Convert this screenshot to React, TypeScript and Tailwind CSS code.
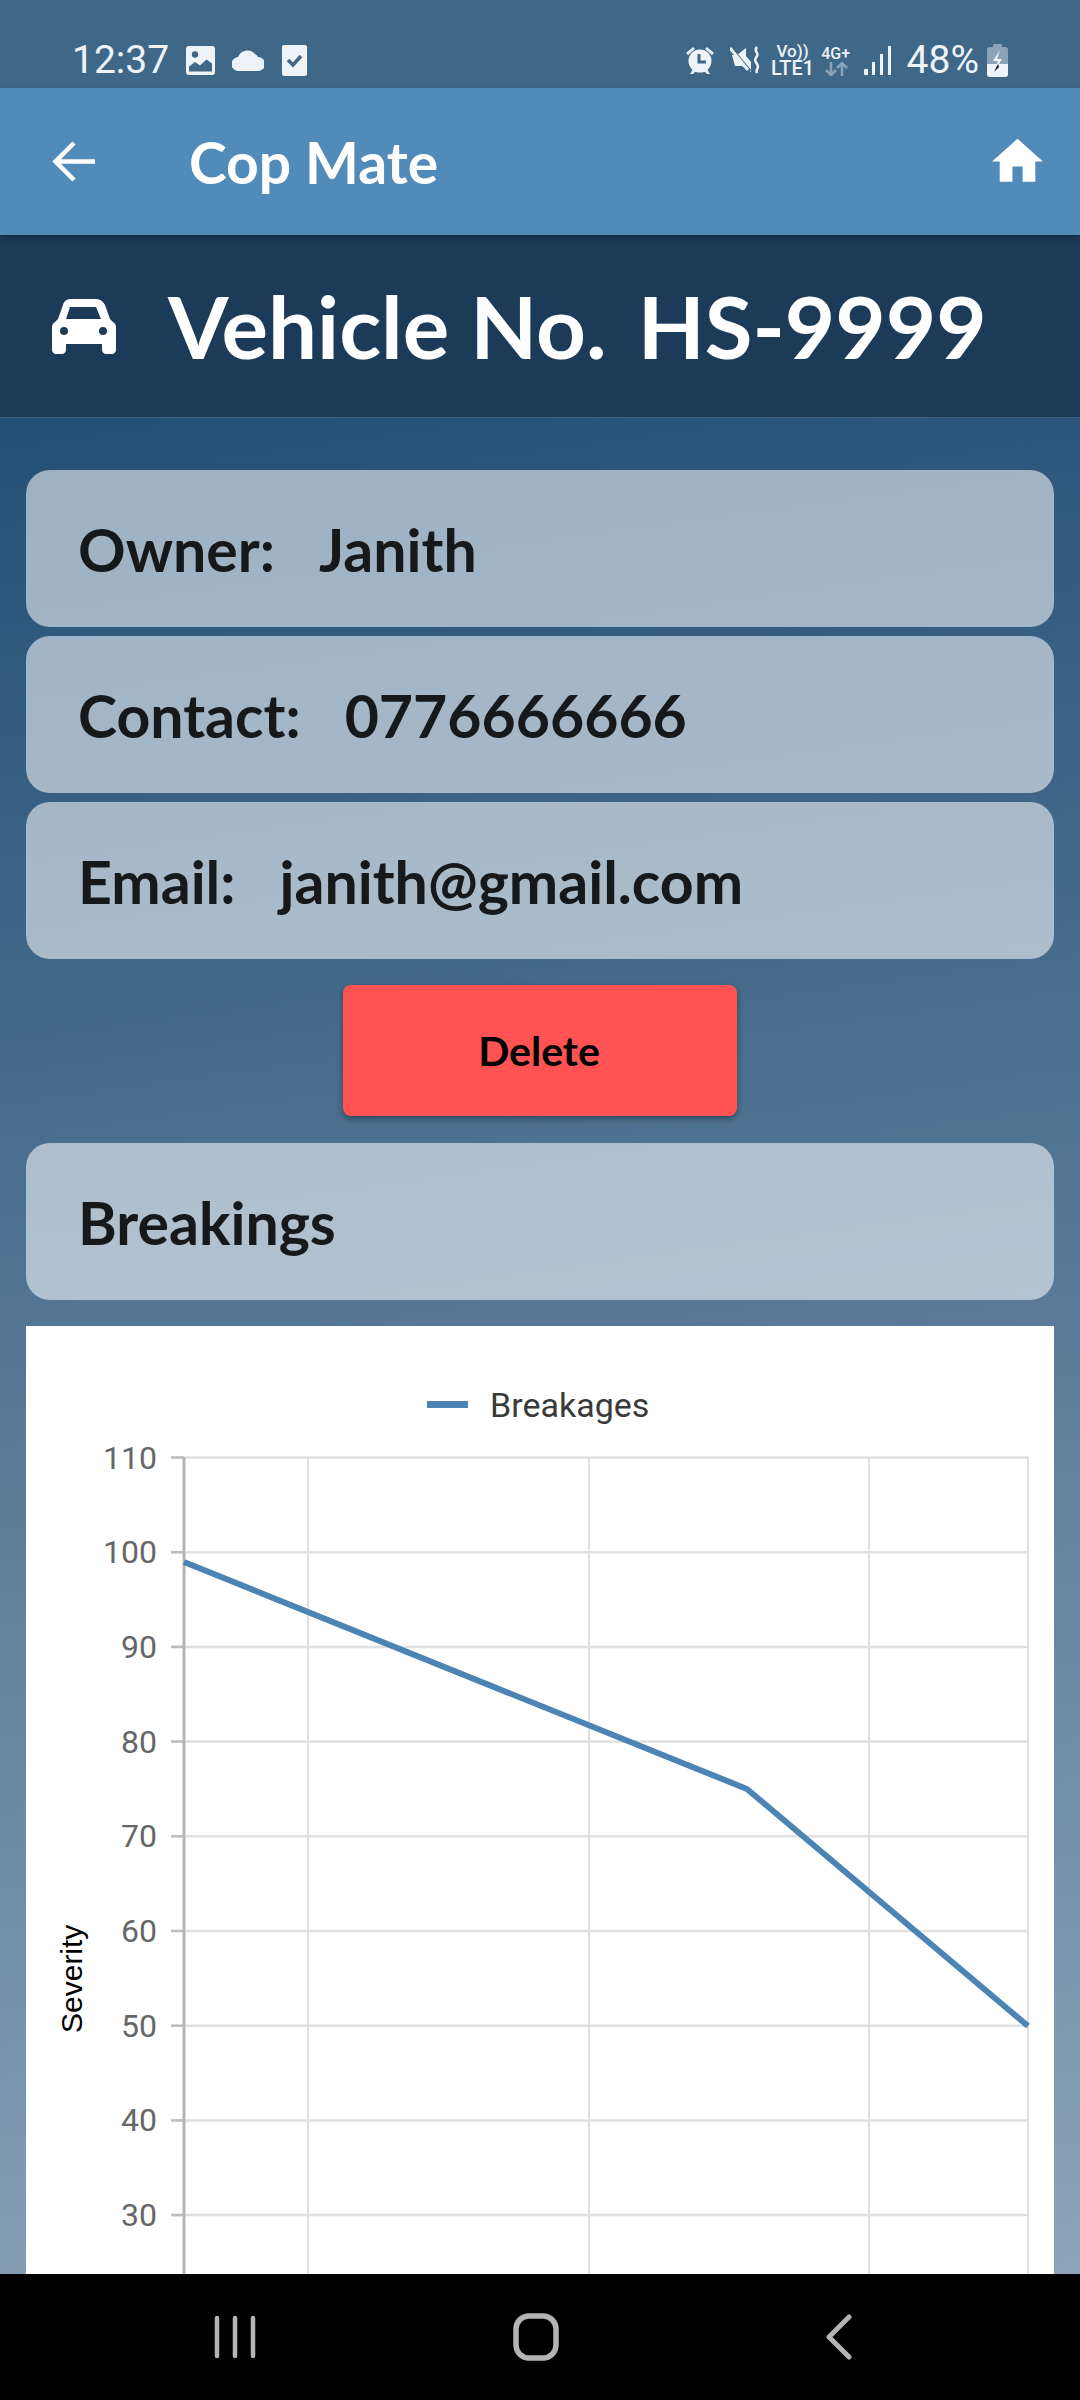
import { MdHome } from "react-icons/md";

const yTicks = [110, 100, 90, 80, 70, 60, 50, 40, 30];
const xGrid = [308, 589, 869, 1028];

function tickY(value: number) {
  return 1457.5 + (110 - value) * 9.47;
}

function InfoCard({ label, value }: { label: string; value?: string }) {
  return (
    <div className="flex h-[157px] items-center rounded-[24px] bg-white/55 pl-[52px] pt-[3px] font-['Lato',sans-serif] text-[59px] font-bold text-[#16191c]">
      <span>{label}</span>
      {value && <span className="ml-[44px]">{value}</span>}
    </div>
  );
}

function StatusBar() {
  return (
    <div className="flex h-[88px] items-center bg-[#3f6888] pl-[72px] pr-[72px] pt-[32px] font-['Roboto',sans-serif] text-[#eef3f7]">
      <span className="text-[39px] leading-none">12:37</span>
      <svg className="ml-[17px]" width="29" height="29" viewBox="0 0 29 29">
        <rect x="0" y="0" width="29" height="29" rx="3" fill="#eef3f7" />
        <circle cx="9" cy="8.5" r="3.2" fill="#3f6888" />
        <path d="M3 25.5v-5l6-4.5 5 3.5 6.5-6 5.5 4v8z" fill="#3f6888" />
      </svg>
      <svg className="ml-[17px]" width="32" height="22" viewBox="0 0 32 22">
        <path d="M7 22a7 7 0 0 1-1-14 10 10 0 0 1 17-3 7 7 0 0 1 3 3 6.5 6.5 0 0 1 0 14z" fill="#eef3f7" />
      </svg>
      <svg className="ml-[18px]" width="25" height="31" viewBox="0 0 25 31">
        <rect width="25" height="31" rx="2" fill="#eef3f7" />
        <path d="M6 15l5 5 8-9" fill="none" stroke="#3f6888" strokeWidth="3.5" />
      </svg>

      <svg className="ml-auto" width="30" height="30" viewBox="0 0 30 30">
        <path d="M1 8l7-6 2 2-7 6zM29 8l-7-6-2 2 7 6z" fill="#eef3f7" />
        <circle cx="15" cy="16" r="11.5" fill="#eef3f7" />
        <path d="M14 9v8h7" fill="none" stroke="#3f6888" strokeWidth="3" />
        <path d="M5 29l3-5 3 2-3 3zM25 29l-3-5-3 2 3 3z" fill="#eef3f7" />
      </svg>
      <svg className="ml-[15px]" width="30" height="30" viewBox="0 0 30 30">
        <path d="M2 10h5l9-7v8l5 6v10l-9-6H5z" fill="#eef3f7" />
        <path d="M1 3l19 23" stroke="#3f6888" strokeWidth="3" />
        <path d="M0 3l18 22" stroke="#eef3f7" strokeWidth="3" />
        <path d="M27 2c-4 4 2 5 0 9s-3 3 0 8-2 5 0 9" fill="none" stroke="#eef3f7" strokeWidth="2.5" />
      </svg>
      <div className="ml-[13px] flex w-[40px] flex-col items-center text-[17px] font-medium leading-[17px]">
        <span>Vo))</span>
        <span className="text-[20px]">LTE1</span>
      </div>
      <div className="ml-[7px] flex w-[32px] flex-col items-center text-[16px] font-medium leading-[17px]">
        <span>4G+</span>
        <svg width="24" height="14" viewBox="0 0 24 14" fill="none" stroke="#8ba3b8" strokeWidth="2.5">
          <path d="M7 0v13M2 8l5 5 5-5M18 14V1M13 6l5-5 5 5" />
        </svg>
      </div>
      <svg className="ml-[12px]" width="28" height="29" viewBox="0 0 28 29" fill="#eef3f7">
        <rect x="0" y="23" width="4" height="6" rx="1" />
        <rect x="8" y="16" width="3" height="13" />
        <rect x="16" y="8" width="3" height="21" />
        <rect x="24" y="0" width="3" height="29" />
      </svg>
      <span className="ml-[15px] text-[39px] leading-none">48%</span>
      <svg className="ml-[8px]" width="21" height="33" viewBox="0 0 21 33">
        <rect x="6" y="0" width="9" height="4" rx="1" fill="#8ba3b8" />
        <rect x="0" y="3" width="21" height="30" rx="3" fill="#8ba3b8" />
        <path d="M0 20h21v10a3 3 0 0 1-3 3H3a3 3 0 0 1-3-3z" fill="#eef3f7" />
        <path d="M13 6l-7 11h5l-4 11 8-13h-5z" fill="#eef3f7" />
        <path d="M11 20l-4 8 5-5z" fill="#111" />
      </svg>
    </div>
  );
}

function Chart() {
  return (
    <div className="mx-[26px] mt-[26px] min-h-0 flex-1 bg-white">
      <svg className="block h-full w-full" viewBox="26 1326 1028 948" preserveAspectRatio="xMinYMin slice" fontFamily="Roboto, sans-serif">
        <rect x="427" y="1401" width="41" height="7" fill="#4c84b4" />
        <text x="490" y="1417" fontSize="34" fill="#3a3a3a">Breakages</text>

        {yTicks.map((tick) => (
          <g key={tick}>
            <line x1="171" x2="1028" y1={tickY(tick)} y2={tickY(tick)} stroke="#e0e0e0" strokeWidth="2.5" />
            <line x1="171" x2="184" y1={tickY(tick)} y2={tickY(tick)} stroke="#bdbdbd" strokeWidth="2.5" />
            <text x="157" y={tickY(tick) + 11} fontSize="32" fill="#666666" textAnchor="end">{tick}</text>
          </g>
        ))}
        {xGrid.map((x) => (
          <line key={x} x1={x} x2={x} y1="1457" y2="2274" stroke="#e0e0e0" strokeWidth="2" />
        ))}
        <line x1="184" x2="184" y1="1457" y2="2274" stroke="#b5b5b5" strokeWidth="3" />

        <polyline points="184,1562 747,1789 1028,2026" fill="none" stroke="#4c84b4" strokeWidth="6" />
        <text transform="translate(82 2033) rotate(-90)" fontFamily="'Liberation Sans', sans-serif" fontSize="30" fill="#000000">Severity</text>
      </svg>
    </div>
  );
}

export default function App() {
  return (
    <div className="flex h-[2400px] w-[1080px] flex-col overflow-hidden bg-[linear-gradient(172deg,#0e3e68_0%,#92a9bd_100%)]">
      <StatusBar />

      <div className="relative z-10 flex h-[147px] items-center bg-[#518bb9] pl-[52px] pr-[32px] font-['Lato',sans-serif] text-white shadow-[0_3px_8px_rgba(0,0,0,0.3)]">
        <svg width="43" height="41" viewBox="0 0 43 41" fill="none" stroke="#ffffff" strokeWidth="4.5">
          <path d="M43 20.5H4M22 2L3.5 20.5 22 39" />
        </svg>
        <span className="ml-[94px] pt-[2px] text-[57px] font-bold">Cop Mate</span>
        <MdHome size={61} className="ml-auto" />
      </div>

      <div className="flex h-[183px] items-center border-b border-[#3e6484] bg-[#1b3b58] pl-[52px] font-['Lato',sans-serif] text-[87px] font-bold text-white">
        <svg width="64" height="55" viewBox="0 0 64 55" fill="#ffffff" fillRule="evenodd">
          <path d="M19 0h25c4 0 7 2 9 6l5 14 3 3c2 1 3 3 3 5v23c0 2-2 4-4 4h-6c-2 0-4-2-4-4v-6H14v6c0 2-2 4-4 4H4c-2 0-4-2-4-4V28c0-2 1-4 3-5l3-3 5-14c1-4 4-6 8-6zM18 8l-4 12h35l-5-12zM12 28a4 4 0 1 0 0 8 4 4 0 0 0 0-8zM51 28a4 4 0 1 0 0 8 4 4 0 0 0 0-8z" />
        </svg>
        <span className="ml-[52px]">Vehicle No.</span>
        <span className="ml-[31px]">HS-9999</span>
      </div>

      <div className="mt-[52px] flex flex-col gap-[9px] px-[26px]">
        <InfoCard label="Owner:" value="Janith" />
        <InfoCard label="Contact:" value="0776666666" />
        <InfoCard label="Email:" value="janith@gmail.com" />
      </div>

      <button className="mx-auto mt-[26px] h-[131px] w-[394px] rounded-[8px] bg-[#ff5252] pr-[2px] font-['Lato',sans-serif] text-[41px] font-bold text-black shadow-[0_3px_6px_rgba(0,0,0,0.35)]">
        Delete
      </button>

      <div className="mt-[27px] px-[26px]">
        <InfoCard label="Breakings" />
      </div>

      <Chart />

      <div className="flex h-[126px] shrink-0 items-center bg-black">
        <svg className="ml-[214px]" width="42" height="44" viewBox="0 0 42 44" stroke="#b4b4b4" strokeWidth="4.5" strokeLinecap="round">
          <path d="M3 3v38M21 3v38M39 3v38" />
        </svg>
        <svg className="ml-[257px]" width="46" height="48" viewBox="0 0 46 48" fill="none" stroke="#b4b4b4" strokeWidth="5.5">
          <rect x="3" y="3" width="40" height="42" rx="13" />
        </svg>
        <svg className="ml-[266px]" width="28" height="46" viewBox="0 0 28 46" fill="none" stroke="#b4b4b4" strokeWidth="5" strokeLinecap="round" strokeLinejoin="round">
          <path d="M24 3L4 23l20 20" />
        </svg>
      </div>
    </div>
  );
}
